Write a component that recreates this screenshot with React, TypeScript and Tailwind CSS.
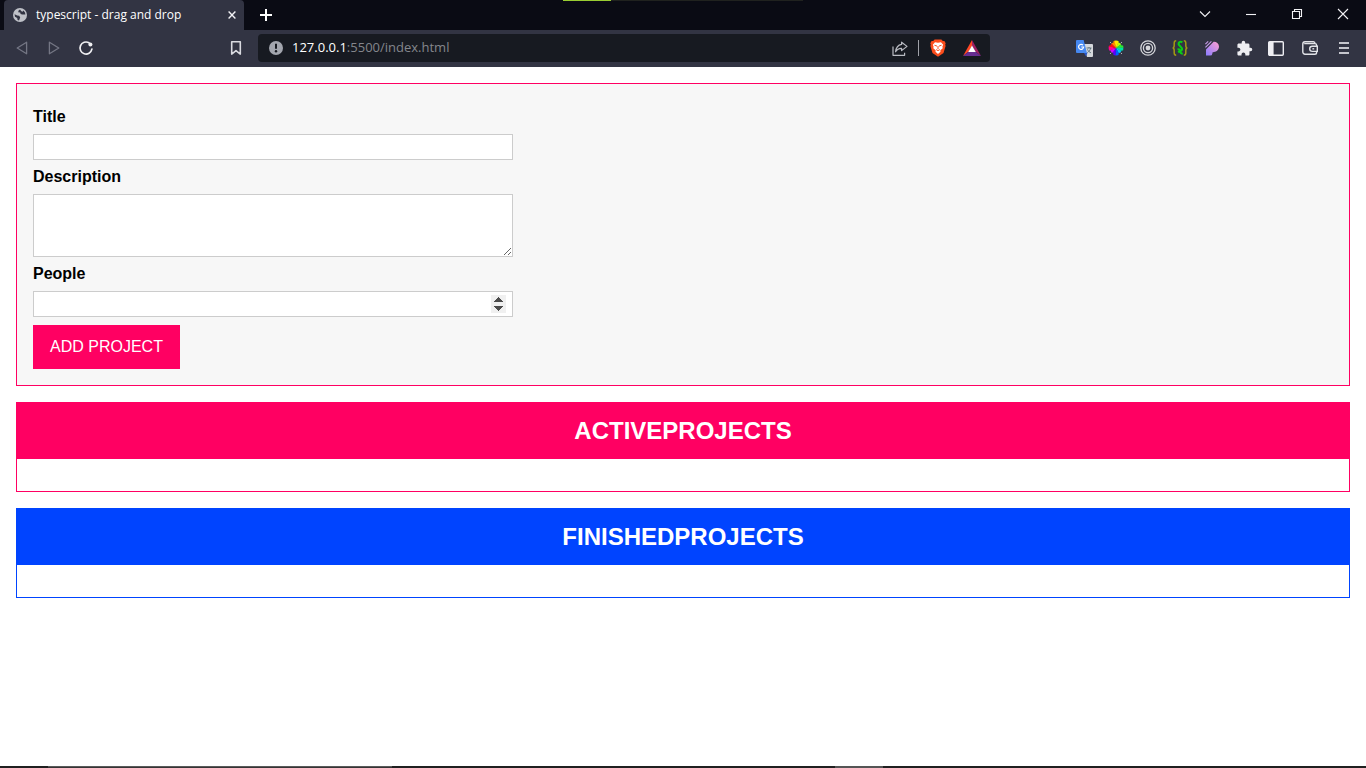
import React from "react";
import { MdExtension } from "react-icons/md";

function GlobeIcon() {
  return (
    <svg viewBox="0 0 14 14" className="size-3.5">
      <circle cx="7" cy="7" r="7" fill="#bfc1c8" />
      <path d="M1.6 6.2 4.2 7.6 6.2 7.8 7.2 9.6 6 12.4 4.6 12 4.2 10 2 8.8zM7 1.6 5.6 2.6 5.2 4.2 7.2 4.6 7.6 6 9.2 6.4 12.4 6.6 12 4.4 10.4 2.6 9.6 3.8 8.4 3.2z" fill="#323443" />
    </svg>
  );
}

function CrossIcon() {
  return (
    <svg viewBox="0 0 8 8" className="size-2">
      <path d="M.6.6l6.8 6.8M7.4.6.6 7.4" stroke="#f2f2f5" strokeWidth="1.4" />
    </svg>
  );
}

function TriangleIcon({ flip }: { flip?: boolean }) {
  return (
    <svg viewBox="0 0 12 14" className="h-3.5 w-3">
      <path
        d={flip ? "M1.4 1.2v11.6L10.8 7z" : "M10.6 1.2v11.6L1.2 7z"}
        fill="none"
        stroke="#747684"
        strokeWidth="1.3"
        strokeLinejoin="round"
      />
    </svg>
  );
}

function ReloadIcon() {
  return (
    <svg viewBox="0 0 16 16" className="size-4">
      <path d="M13.9 9.2A6 6 0 1 1 11 2.8" fill="none" stroke="#f0f0f3" strokeWidth="1.7" strokeLinecap="round" />
      <circle cx="12.4" cy="4.4" r="2" fill="#f0f0f3" />
    </svg>
  );
}

function BookmarkIcon() {
  return (
    <svg viewBox="0 0 12 16" className="h-4 w-3">
      <path d="M1.7 1.7h8.6v12.4L6 10.6l-4.3 3.5z" fill="none" stroke="#d9dae0" strokeWidth="1.6" strokeLinejoin="round" />
    </svg>
  );
}

function InfoIcon() {
  return (
    <svg viewBox="0 0 14 14" className="size-3.5">
      <circle cx="7" cy="7" r="7" fill="#a3a6ae" />
      <path d="M7 2.8v5" stroke="#171a21" strokeWidth="2" />
      <circle cx="7" cy="10.3" r="1.2" fill="#171a21" />
    </svg>
  );
}

function ShareIcon() {
  return (
    <svg viewBox="0 0 16 15" className="h-[15px] w-4" fill="none" stroke="#b9bbc2" strokeWidth="1.2" strokeLinejoin="round">
      <path d="M1 5.5v8.8h11.6v-2.6" />
      <path d="M9.6 1.2 15 5.4 9.6 9.6V7.4C7 7.3 5 8.5 3.6 10.8 4 6.8 6 4 9.6 3.4z" />
    </svg>
  );
}

function BraveIcon() {
  return (
    <svg viewBox="0 0 16 18" className="h-[18px] w-4">
      <path d="M4.6.4h6.8l1.4 1.5 1.6.1 1.3 2.2-.5 1.2.4 1.6-2.1 7.1L8 17.8l-5.5-3.7L.4 7l.4-1.6-.5-1.2L1.6 2l1.6-.1z" fill="#fb4d1c" />
      <path d="M5 3.2 8 3.8l3-.6 2.2 2.6-.8 1.8.3 1.6-2.3 2 .1 1.6L8 15l-2.5-2.2.1-1.6-2.3-2 .3-1.6-.8-1.8z" fill="#fff" />
      <path d="M4.4 6.2l2.6.9M11.6 6.2 9 7.1M8 7v3M6.2 10.6 8 11.6l1.8-1" stroke="#fb4d1c" strokeWidth="1" fill="none" />
    </svg>
  );
}

function RewardsIcon() {
  return (
    <svg viewBox="0 0 18 16" className="h-4 w-[18px]">
      <path d="M9 0v6L5.4 11.8 0 16z" fill="#ff4724" />
      <path d="M9 0l9 16-5.4-4.2L9 6z" fill="#9e1f63" />
      <path d="M0 16l5.4-4.2h7.2L18 16z" fill="#662d91" />
      <path d="M9 5.4l3.8 6.6H5.2z" fill="#fff" />
    </svg>
  );
}

function TranslateIcon() {
  return (
    <svg viewBox="0 0 17 17" className="size-[17px]">
      <path d="M7 4h9a1 1 0 0 1 1 1v11a1 1 0 0 1-1 1h-5z" fill="#d5d8dc" />
      <path d="M10.5 8h5M13 7v1M14.7 8c-.5 2.2-1.8 3.6-3.4 4.6M11.5 9.4c.7 1.6 2 2.8 3.4 3.4" stroke="#61757e" strokeWidth="1" fill="none" />
      <path d="M1 0h6.6L11 13H1a1 1 0 0 1-1-1V1a1 1 0 0 1 1-1z" fill="#4688f1" />
      <path d="M8 13h3.4L10 16.4z" fill="#2a56c6" />
      <path d="M7 5.2A2.5 2.5 0 1 0 7.6 7H5.2" stroke="#fff" strokeWidth="1.2" fill="none" />
    </svg>
  );
}

const wheelColors = ["#b6ff00", "#30e830", "#00e0a0", "#00c8ff", "#0060ff", "#5a00ff", "#d400ff", "#ff0090", "#ff1010", "#ff8a00", "#ffe600"];

function ColorWheelIcon() {
  return (
    <svg viewBox="-8 -8 16 16" className="size-4">
      {wheelColors.map((color, i) => (
        <path key={color} d="M0 0V-7.4A7.4 7.4 0 0 1 4.3-6z" fill={color} transform={`rotate(${(i * 360) / 11 + 20})`} />
      ))}
      <path d="M-7.4-3A8 8 0 0 1-3-7.4M3-7.4A8 8 0 0 1 7.4-3M-7.4 3A8 8 0 0 0-3 7.4M3 7.4A8 8 0 0 0 7.4 3" fill="none" stroke="#323443" strokeWidth="3.4" />
      <path d="M-5.8-5.8l1 1M5.8-5.8l-1 1M-5.8 5.8l1-1M5.8 5.8l-1-1" stroke="#d8d8dc" strokeWidth="1" />
    </svg>
  );
}

function TargetIcon() {
  return (
    <svg viewBox="0 0 16 16" className="size-4" fill="none" stroke="#d4d5da" strokeWidth="1.3">
      <circle cx="8" cy="8" r="7.2" />
      <circle cx="8" cy="8" r="4.6" />
      <circle cx="8" cy="8" r="2.4" fill="#d4d5da" stroke="none" />
    </svg>
  );
}

function BracesIcon() {
  return (
    <svg viewBox="0 0 16 16" className="size-4" fill="none">
      <path d="M4.2.8C2.4.8 2.2 1.6 2.2 3v2.6C2.2 7 1.8 8 .6 8c1.2 0 1.6 1 1.6 2.4V13c0 1.4.2 2.2 2 2.2M11.8.8c1.8 0 2 .8 2 2.2v2.6c0 1.4.4 2.4 1.6 2.4-1.2 0-1.6 1-1.6 2.4V13c0 1.4-.2 2.2-2 2.2" stroke="#a39a12" strokeWidth="1.5" />
      <path d="M10.4 2.2C8 1 6.4 2.4 6.6 4.2c.2 2 3.8 2.6 3.4 5.4-.2 1.8-2.6 1.8-3.8 2.8M5.6 9.6c1-.6 2.6-.2 2.6 1.4 0 1.4.6 3 2.6 2.4" stroke="#08d015" strokeWidth="2.1" />
    </svg>
  );
}

function BrushIcon() {
  return (
    <svg viewBox="0 0 14 15" className="h-[15px] w-3.5">
      <defs>
        <linearGradient id="brush" x1="1" y1="0" x2="0" y2="1">
          <stop offset="0" stopColor="#ff9fd0" />
          <stop offset="1" stopColor="#8a7cff" />
        </linearGradient>
      </defs>
      <path d="M1 14.6V8.4L8.6.8a5 5 0 0 1 5.4 4.8c0 3-2.2 5.4-5 5.4l-1.6.4v1A2.4 2.4 0 0 1 5 14.6z" fill="url(#brush)" />
      <path d="M.4 3.2 3.2.4M.4 6.4 6.4.4" stroke="#c79be8" strokeWidth="1.1" />
    </svg>
  );
}

function SidebarIcon() {
  return (
    <svg viewBox="0 0 16 15" className="h-[15px] w-4">
      <rect x=".7" y=".7" width="14.6" height="13.6" rx="1" fill="none" stroke="#eeeef2" strokeWidth="1.4" />
      <path d="M1 1h4.6v13H1z" fill="#eeeef2" />
    </svg>
  );
}

function WalletIcon() {
  return (
    <svg viewBox="0 0 16 14" className="h-3.5 w-4" fill="none" stroke="#e2e3e8" strokeWidth="1.4">
      <path d="M14.6 5V4.2a1.6 1.6 0 0 0-1.6-1.6H2.2M13 2.4A1.7 1.7 0 0 0 11.4.8H3A2.2 2.2 0 0 0 .8 3v8A2.2 2.2 0 0 0 3 13.2h9.8a1.8 1.8 0 0 0 1.8-1.8v-.8" />
      <path d="M15.3 5.2h-5a2.6 2.6 0 0 0 0 5.2h5z" />
      <path d="M10.4 7.8h1.8" />
    </svg>
  );
}

function MenuIcon() {
  return (
    <svg viewBox="0 0 10 12" className="h-3 w-2.5">
      <path d="M0 1h10M0 6h10M0 11h10" stroke="#c5c6cd" strokeWidth="1.8" />
    </svg>
  );
}

function WindowButton({ label, path }: { label: string; path: string }) {
  return (
    <button aria-label={label} className="flex h-7 w-[46px] items-center justify-center">
      <svg viewBox="0 0 12 12" className="size-3" fill="none" stroke="#f2f2f5" strokeWidth="1.1">
        <path d={path} />
      </svg>
    </button>
  );
}

function ToolButton({ label, className = "w-8", children }: { label: string; className?: string; children: React.ReactNode }) {
  return (
    <button aria-label={label} className={`flex h-8 shrink-0 items-center justify-center ${className}`}>
      {children}
    </button>
  );
}

function TabStrip() {
  return (
    <div className="relative flex h-[30px] items-start bg-[#0a0b14] pl-1">
      <div className="flex h-[30px] w-60 items-center rounded-t bg-[#323443] pr-2 pl-[9px] text-white">
        <GlobeIcon />
        <span className="ml-[9px] flex-1 text-xs font-medium whitespace-nowrap">typescript - drag and drop</span>
        <button aria-label="Close tab"><CrossIcon /></button>
      </div>
      <button aria-label="New tab" className="flex h-[30px] w-11 items-center justify-center">
        <svg viewBox="0 0 12 12" className="size-3">
          <path d="M6 0v12M0 6h12" stroke="#fff" strokeWidth="2" />
        </svg>
      </button>
      <div className="ml-auto flex">
        <WindowButton label="Search tabs" path="M1 3.5l5 5 5-5" />
        <WindowButton label="Minimize" path="M1 6.5h10" />
        <WindowButton label="Restore" path="M1.5 3.5h7v7h-7zM3.5 3.5v-2h7v7h-2" />
        <WindowButton label="Close" path="M1 1l10 10M11 1L1 11" />
      </div>
      <div className="absolute top-0 left-1/2 flex h-px w-60 -translate-x-1/2 bg-[#20221f]">
        <div className="w-12 bg-[#9acd32]" />
      </div>
    </div>
  );
}

function Toolbar() {
  return (
    <div className="flex h-[37px] items-center bg-[#323443] px-1.5 pb-px">
      <ToolButton label="Back"><TriangleIcon /></ToolButton>
      <ToolButton label="Forward"><TriangleIcon flip /></ToolButton>
      <ToolButton label="Reload"><ReloadIcon /></ToolButton>
      <ToolButton label="Bookmark" className="ml-auto w-8"><BookmarkIcon /></ToolButton>
      <div className="ml-1.5 flex h-7 w-[732px] min-w-0 items-center rounded bg-[#171a21] pr-px pl-[11px]">
        <InfoIcon />
        <div className="ml-[9px] flex-1 text-[13px] whitespace-nowrap text-[#84868c]">
          <span className="text-white">127.0.0.1</span>:5500/index.html
        </div>
        <ToolButton label="Share"><ShareIcon /></ToolButton>
        <div className="mx-0.5 h-4 w-px bg-[#a0a2a9]" />
        <ToolButton label="Shields" className="w-[34px]"><BraveIcon /></ToolButton>
        <ToolButton label="Rewards" className="w-[34px]"><RewardsIcon /></ToolButton>
      </div>
      <div className="flex pl-[78px]">
        <ToolButton label="Translate"><TranslateIcon /></ToolButton>
        <ToolButton label="Color picker"><ColorWheelIcon /></ToolButton>
        <ToolButton label="Target"><TargetIcon /></ToolButton>
        <ToolButton label="Formatter"><BracesIcon /></ToolButton>
        <ToolButton label="Paint"><BrushIcon /></ToolButton>
        <ToolButton label="Extensions"><MdExtension className="size-[17px] text-[#eeeef2]" /></ToolButton>
        <ToolButton label="Sidebar"><SidebarIcon /></ToolButton>
        <ToolButton label="Wallet" className="w-9"><WalletIcon /></ToolButton>
        <ToolButton label="Menu"><MenuIcon /></ToolButton>
      </div>
    </div>
  );
}

function ProjectForm() {
  const field = "w-full max-w-[480px] border border-[#cccccc] bg-white px-1.5 py-[3px]";
  return (
    <form
      className="flex flex-col items-start gap-2 border border-[#ff0062] bg-[#f7f7f7] px-4 pt-6 pb-4 leading-[18px]"
      onSubmit={(e) => e.preventDefault()}
    >
      <label htmlFor="title" className="font-bold">Title</label>
      <input id="title" type="text" className={field} />
      <label htmlFor="description" className="font-bold">Description</label>
      <textarea id="description" className={`${field} h-[63px] resize`} />
      <label htmlFor="people" className="font-bold">People</label>
      <input
        id="people"
        type="number"
        className={`${field} [&::-webkit-inner-spin-button]:h-[18px] [&::-webkit-inner-spin-button]:opacity-100 [&::-webkit-inner-spin-button]:brightness-[0.73] [&::-webkit-inner-spin-button]:contrast-200`}
      />
      <button type="submit" className="bg-[#ff0062] px-[17px] py-[13px] text-white">ADD PROJECT</button>
    </form>
  );
}

function ProjectList({ title, border, fill }: { title: string; border: string; fill: string }) {
  return (
    <section className={`border ${border}`}>
      <header className={`py-3.5 text-center ${fill}`}>
        <h2 className="text-2xl leading-7 font-bold text-white">{title}</h2>
      </header>
      <ul className="h-8" />
    </section>
  );
}

export default function App() {
  return (
    <div className="flex min-h-screen flex-col bg-white">
      <header className="font-['Open_Sans',sans-serif]">
        <TabStrip />
        <Toolbar />
      </header>
      <main className="flex flex-1 flex-col gap-4 p-4 font-['Liberation_Sans',sans-serif] text-base text-black">
        <ProjectForm />
        <ProjectList title="ACTIVEPROJECTS" border="border-[#ff0062]" fill="bg-[#ff0062]" />
        <ProjectList title="FINISHEDPROJECTS" border="border-[#0044ff]" fill="bg-[#0044ff]" />
      </main>
      <footer className="flex h-0.5 bg-[#202020]">
        <div className="ml-12 w-[344px] border-t border-[#5a5a5a] bg-[#353535]" />
        <div className="ml-[443px] w-12 bg-[#555555]" />
      </footer>
    </div>
  );
}
